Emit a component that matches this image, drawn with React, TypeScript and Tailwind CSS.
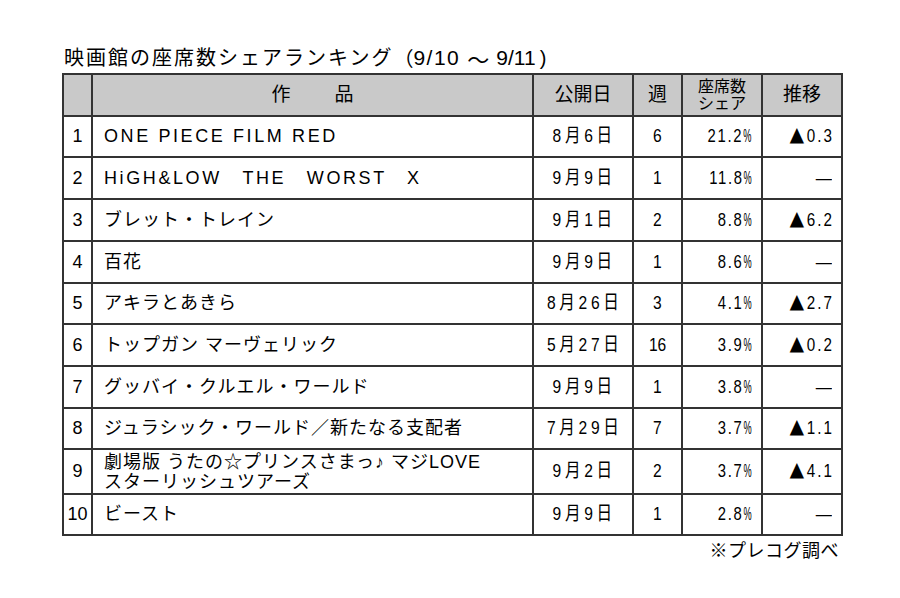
import React from "react";

type Row = {
  n: string;
  title: React.ReactNode;
  latin?: boolean;
  date: string;
  week: string;
  share: string;
  trend: string;
  h: string;
};

const rows: Row[] = [
  { n: "1", title: "ONE PIECE FILM RED", latin: true, date: "8月6日", week: "6", share: "21.2", trend: "0.3", h: "h-[41px]" },
  { n: "2", title: "HiGH&LOW　THE　WORST　X", latin: true, date: "9月9日", week: "1", share: "11.8", trend: "", h: "h-[42px]" },
  { n: "3", title: "ブレット・トレイン", date: "9月1日", week: "2", share: "8.8", trend: "6.2", h: "h-[42px]" },
  { n: "4", title: "百花", date: "9月9日", week: "1", share: "8.6", trend: "", h: "h-[42px]" },
  { n: "5", title: "アキラとあきら", date: "8月26日", week: "3", share: "4.1", trend: "2.7", h: "h-[41px]" },
  { n: "6", title: "トップガン マーヴェリック", date: "5月27日", week: "16", share: "3.9", trend: "0.2", h: "h-[42px]" },
  { n: "7", title: "グッバイ・クルエル・ワールド", date: "9月9日", week: "1", share: "3.8", trend: "", h: "h-[42px]" },
  { n: "8", title: "ジュラシック・ワールド／新たなる支配者", date: "7月29日", week: "7", share: "3.7", trend: "1.1", h: "h-[41px]" },
  {
    n: "9",
    title: (
      <span className="block leading-[20px]">
        劇場版 うたの☆プリンスさまっ♪ マジLOVE
        <br />
        スターリッシュツアーズ
      </span>
    ),
    date: "9月2日",
    week: "2",
    share: "3.7",
    trend: "4.1",
    h: "h-[45px]",
  },
  { n: "10", title: "ビースト", date: "9月9日", week: "1", share: "2.8", trend: "", h: "h-[41px]" },
];

const cell = "border-r-2 border-b-2 border-[#333] flex items-center";

function Share({ v }: { v: string }) {
  return (
    <span className="inline-flex items-center scale-x-[0.78] origin-right whitespace-nowrap">
      <span className="tracking-[2.2px]">{v}</span>
      <span className="inline-block w-[11px]">
        <span className="inline-block scale-x-[0.62] origin-left">%</span>
      </span>
    </span>
  );
}

function Trend({ v }: { v: string }) {
  if (!v) {
    return (
      <span className="inline-block text-[19px] scale-x-[0.85] origin-right mr-[2px]">—</span>
    );
  }
  return (
    <span className="inline-flex items-center whitespace-nowrap scale-x-[0.8] origin-right">
      <span className="font-['Noto_Sans_CJK_JP',sans-serif] text-[19px] mr-[3px]">▲</span>
      <span className="text-[19px] tracking-[2.5px]">{v}</span>
    </span>
  );
}

export default function App() {
  return (
    <div className="w-[900px] h-[598px] bg-white text-black pt-[43px] pl-[62px] font-['Liberation_Sans','Noto_Sans_CJK_JP',sans-serif]">
      <div className="h-[30px] flex items-center text-[20px] tracking-[2px] leading-[30px] pl-[2px] whitespace-nowrap">
        <span>映画館の座席数シェアランキング</span>
        <span className="font-['Noto_Sans_CJK_JP',sans-serif] tracking-normal">（</span>
        <span className="text-[21px] tracking-[1.5px]">9/10</span>
        <span className="px-[7px] text-[22px] font-['Noto_Sans_CJK_JP',sans-serif] tracking-normal">～</span>
        <span className="text-[21px] tracking-[0px]">9/11</span>
        <span className="font-['Liberation_Sans',sans-serif] tracking-normal pl-[4px]">)</span>
      </div>

      <div className="w-[781px] border-l-2 border-t-2 border-[#333]">
        <div className="grid grid-cols-[29px_441px_100px_49px_80px_80px] h-[42px] bg-[#c9c9c9]">
          <div className={cell}></div>
          <div className={`${cell} justify-center text-[19px] tracking-[2px] pl-[2px]`}>作　　品</div>
          <div className={`${cell} justify-center text-[19px]`}>公開日</div>
          <div className={`${cell} justify-center text-[19px]`}>週</div>
          <div className={`${cell} flex-col justify-center text-[16px] leading-[17px] text-center`}>
            <span className="block">座席数</span>
            <span className="block">シェア</span>
          </div>
          <div className={`${cell} justify-center text-[19px]`}>推移</div>
        </div>

        {rows.map((r) => (
          <div key={r.n} className={`grid grid-cols-[29px_441px_100px_49px_80px_80px] ${r.h}`}>
            <div className={`${cell} justify-center text-[18px]`}>{r.n}</div>
            <div
              className={`${cell} pl-[11px] whitespace-nowrap ${
                r.latin ? "text-[18px] tracking-[2.6px]" : "text-[18px] tracking-[1px]"
              }`}
            >
              {r.title}
            </div>
            <div className={`${cell} justify-center`}>
              <span className="inline-block text-[19px] tracking-[4.5px] pl-[4px] scale-x-[0.82] whitespace-nowrap">
                {r.date}
              </span>
            </div>
            <div className={`${cell} justify-center`}>
              <span className="inline-block text-[19px] scale-x-[0.82]">{r.week}</span>
            </div>
            <div className={`${cell} justify-end pr-[9px] text-[19px]`}>
              <Share v={r.share} />
            </div>
            <div className={`${cell} justify-end pr-[7px]`}>
              <Trend v={r.trend} />
            </div>
          </div>
        ))}
      </div>

      <div className="w-[781px] flex justify-end pr-[4px] mt-[3px] text-[18px] leading-[24px] tracking-[0.5px]">
        ※プレコグ調べ
      </div>
    </div>
  );
}
